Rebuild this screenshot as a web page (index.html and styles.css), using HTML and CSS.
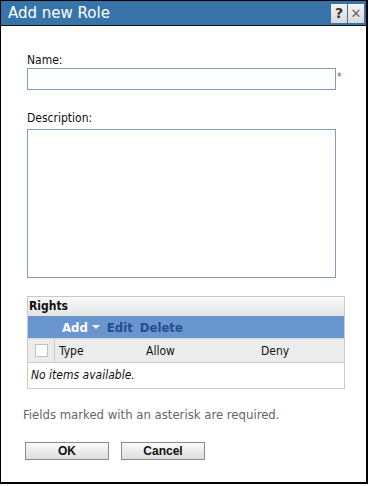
FILE: index.html
```html
<!DOCTYPE html>
<html lang="en">

<head>
    <meta charset="utf-8">
    <title>Add new Role</title>
    <link rel="stylesheet" href="styles.css">
</head>

<body>
    <section class="dialog">
        <header class="titlebar">
            <h1>Add new Role</h1>
            <div class="title-knapper">
                <button class="title-knap">?</button>
                <button class="title-knap luk">&#x2715;</button>
            </div>
        </header>

        <div class="indhold">
            <label class="felt-label" for="navn">Name:</label>
            <div class="felt-raekke">
                <input id="navn" class="tekstfelt" type="text">
                <span class="stjerne">*</span>
            </div>

            <label class="felt-label beskrivelse-label" for="beskrivelse">Description:</label>
            <textarea id="beskrivelse" class="tekstomraade"></textarea>

            <div class="rettigheder">
                <div class="ret-titel">Rights</div>
                <div class="ret-vaerktoej">
                    <span class="tilfoej">Add <span class="pil"></span></span>
                    <span class="handling">Edit</span>
                    <span class="handling">Delete</span>
                </div>
                <div class="kolonner">
                    <div class="vaelg"><span class="boks"></span></div>
                    <div class="kol type">Type</div>
                    <div class="kol tillad">Allow</div>
                    <div class="kol naegt">Deny</div>
                </div>
                <div class="tom">No items available.</div>
            </div>

            <p class="note">Fields marked with an asterisk are required.</p>

            <div class="knapper">
                <button class="knap">OK</button>
                <button class="knap">Cancel</button>
            </div>
        </div>
    </section>
</body>

</html>
```

FILE: styles.css
```css
* {
    box-sizing: border-box;
}

body {
    margin: 0;
    background-color: #fff;
    font-family: 'DejaVu Sans Condensed', 'DejaVu Sans', sans-serif;
    font-size: 12px;
    color: #111;
}

.dialog {
    width: 368px;
    height: 484px;
    border: 1px solid #000;
    border-width: 1px 2px 2px 1px;
}

.titlebar {
    height: 25px;
    background-color: #3674aa;
    border-bottom: 1px solid #111;
    display: flex;
    align-items: center;
    justify-content: space-between;
    padding: 0 2px 0 7px;
}

.titlebar h1 {
    margin: 0;
    font-family: 'DejaVu Sans', sans-serif;
    font-size: 15px;
    font-weight: normal;
    color: #fff;
}

.title-knapper {
    display: flex;
    gap: 1px;
}

.title-knap {
    width: 16px;
    height: 19px;
    padding: 0;
    border: none;
    background: linear-gradient(#f4f4f4, #d9d9d9);
    font-family: 'DejaVu Sans', sans-serif;
    font-weight: bold;
    font-size: 14px;
    color: #333;
    line-height: 19px;
}

.title-knap.luk {
    font-weight: normal;
    font-size: 13px;
    color: #666;
}

.indhold {
    padding: 26px 0 0 26px;
}

.felt-label {
    display: block;
    height: 16px;
    line-height: 16px;
}

.felt-raekke {
    display: flex;
    align-items: flex-start;
}

.tekstfelt {
    width: 309px;
    height: 22px;
    margin: 0;
    border: 1px solid #7f9db9;
}

.stjerne {
    color: #3a6bb5;
    font-size: 10px;
    padding: 3px 0 0 1px;
}

.beskrivelse-label {
    margin-top: 20px;
}

.tekstomraade {
    display: block;
    width: 309px;
    height: 149px;
    margin: 3px 0 0;
    border: 1px solid #7f9db9;
    resize: none;
}

.rettigheder {
    width: 318px;
    margin-top: 18px;
    border: 1px solid #c8c8c8;
}

.ret-titel {
    height: 19px;
    line-height: 19px;
    padding-left: 1px;
    font-weight: bold;
    background: linear-gradient(#fafafa, #e4e4e4);
}

.ret-vaerktoej {
    height: 22px;
    background-color: #6a96cf;
    display: flex;
    align-items: center;
    gap: 7px;
    padding-left: 34px;
    font-size: 13px;
    font-weight: bold;
    color: #234c92;
}

.tilfoej {
    color: #fff;
    display: flex;
    align-items: center;
    gap: 4px;
}

.pil {
    border-left: 4px solid transparent;
    border-right: 4px solid transparent;
    border-top: 4px solid #fff;
}

.kolonner {
    height: 25px;
    display: flex;
    align-items: center;
    background-color: #ececec;
    border-top: 1px solid #d6d6d6;
    border-bottom: 1px solid #c8c8c8;
}

.vaelg {
    width: 27px;
    height: 100%;
    display: flex;
    align-items: center;
    justify-content: center;
    border-right: 1px solid #d0d0d0;
}

.boks {
    width: 13px;
    height: 13px;
    background-color: #fff;
    border: 1px solid #c0c0c0;
}

.kol {
    padding-left: 4px;
}

.type {
    width: 87px;
}

.tillad {
    width: 115px;
}

.tom {
    height: 25px;
    line-height: 25px;
    padding-left: 3px;
    font-style: italic;
}

.note {
    margin: 18px 0 0 -4px;
    font-size: 13px;
    color: #666;
}

.knapper {
    display: flex;
    gap: 12px;
    margin-top: 20px;
    margin-left: -2px;
}

.knap {
    width: 84px;
    height: 18px;
    padding: 0;
    border: 1px solid #8a8a8a;
    background: linear-gradient(#fbfbfb, #dcdcdc);
    font-family: 'Liberation Sans', Arial, sans-serif;
    font-weight: bold;
    font-size: 12px;
    color: #111;
}
```
